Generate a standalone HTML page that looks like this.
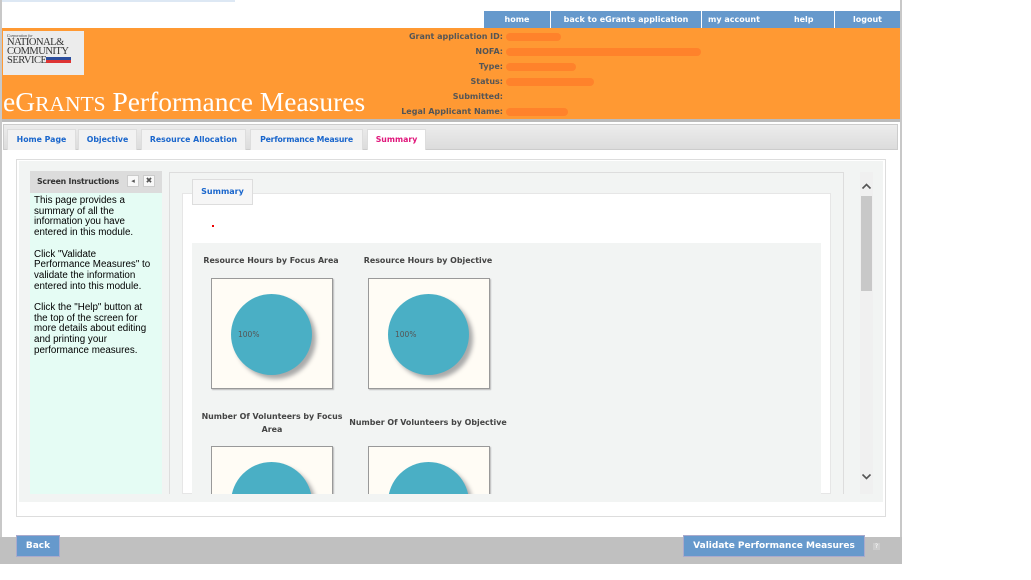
<!DOCTYPE html>
<html><head><meta charset="utf-8"><style>
*{margin:0;padding:0;box-sizing:border-box}
body{width:1031px;height:580px;background:#fff;position:relative;overflow:hidden;font-family:"DejaVu Sans","Liberation Sans",sans-serif}
.a{position:absolute}
.nav{top:11px;height:17px;background:#6699cc;color:#fff;font-weight:bold;font-size:8px;line-height:17px;text-align:center;white-space:nowrap}
.lbl{right:528px;color:#555;font-weight:bold;font-size:8px;text-align:right;width:200px}
.scr{background:#ff7f2a;height:8px;border-radius:4px;opacity:.9}
.tab{top:129px;height:21px;background:#f2f2f2;border:1px solid #ddd;border-bottom:none;color:#1a66cc;font-weight:bold;font-size:7.8px;line-height:20px;text-align:center;white-space:nowrap}
.ins{font-family:"Liberation Sans",sans-serif;font-size:9.8px;line-height:10.7px;color:#000;white-space:nowrap}
.ct{font-weight:bold;font-size:7.9px;color:#444;text-align:center}
.box{width:122px;height:111px;background:#fffcf5;border:1px solid #999;box-shadow:1px 1px 1px #bbb;overflow:hidden}
.pie{position:absolute;left:19px;top:15px;width:81px;height:81px;border-radius:50%;background:#4aafc5;box-shadow:4px 4px 4px #aaa}
.pl{position:absolute;left:26px;top:51px;font-size:7.5px;color:#555}
.btn{background:#6699cc;color:#fff;font-weight:bold;font-size:9px;line-height:20px;text-align:center;border:1px solid #aac;white-space:nowrap}
</style></head><body>
<div class="a" style="left:0;top:0;width:235px;height:2px;background:#dde8f4"></div>
<div class="a" style="left:0;top:0;width:2px;height:538px;background:#c8c8c8"></div>
<div class="a" style="left:900px;top:0;width:2px;height:538px;background:#c8c8c8"></div>
<div class="a nav" style="left:484px;width:66px">home</div>
<div class="a nav" style="left:551px;width:150px">back to eGrants application</div>
<div class="a nav" style="left:702px;width:132px;text-align:left;padding-left:6px">my account<span style="margin-left:34px">help</span></div>
<div class="a nav" style="left:835px;width:65px">logout</div>
<div class="a" style="left:2px;top:28px;width:898px;height:91px;background:#ff9933"></div>
<div class="a" style="left:2px;top:119px;width:898px;height:3px;background:#bbb"></div>
<div class="a" style="left:3px;top:31px;width:81px;height:44px;background:#ececec;font-family:'Liberation Serif',serif;color:#333;padding:2px 0 0 4px">
<div style="font-size:4px;font-style:italic">Corporation for</div>
<div style="font-size:10.5px;line-height:9px;letter-spacing:-.5px">NATIONAL&amp;<br>COMMUNITY<br>SERVICE<span style="display:inline-block;width:25px;height:6px;background:linear-gradient(#2a4c9c 50%,#d33 50%)"></span></div></div>
<div class="a" style="left:3px;top:86px;color:#fff;font-family:'Liberation Serif',serif;font-size:27.5px;white-space:nowrap">eG<span style="font-size:21.5px">RANTS</span> Performance Measures</div>
<div class="a lbl" style="top:32px">Grant application ID:</div>
<div class="a lbl" style="top:47px">NOFA:</div>
<div class="a lbl" style="top:62px">Type:</div>
<div class="a lbl" style="top:77px">Status:</div>
<div class="a lbl" style="top:92px">Submitted:</div>
<div class="a lbl" style="top:107px">Legal Applicant Name:</div>
<div class="a scr" style="left:506px;top:33px;width:55px"></div>
<div class="a scr" style="left:506px;top:48px;width:195px"></div>
<div class="a scr" style="left:506px;top:63px;width:70px"></div>
<div class="a scr" style="left:506px;top:78px;width:88px"></div>
<div class="a scr" style="left:506px;top:108px;width:62px"></div>
<div class="a" style="left:3px;top:124px;width:895px;height:26px;background:linear-gradient(#ececec,#dcdcdc);border:1px solid #ccc"></div>
<div class="a tab" style="left:7px;width:69px">Home Page</div>
<div class="a tab" style="left:78px;width:59px">Objective</div>
<div class="a tab" style="left:141px;width:105px">Resource Allocation</div>
<div class="a tab" style="left:250px;width:113px;letter-spacing:-.2px">Performance Measure</div>
<div class="a tab" style="left:367px;width:59px;background:#fff;color:#e0157a">Summary</div>
<div class="a" style="left:16px;top:159px;width:870px;height:358px;border:1px solid #ddd"></div>
<div class="a" style="left:19px;top:161px;width:864px;height:341px;background:#f2f4f3"></div>
<div class="a" style="left:30px;top:171px;width:132px;height:22px;background:#dcdcdc"></div>
<div class="a" style="left:37px;top:177px;font-size:7.8px;color:#333;font-weight:bold;white-space:nowrap;letter-spacing:-.2px">Screen Instructions</div>
<div class="a" style="left:127px;top:175px;width:12px;height:12px;background:#f8f8f8;border:1px solid #ccc;font-size:7px;text-align:center;line-height:10px;color:#555">◂</div>
<div class="a" style="left:143px;top:175px;width:12px;height:12px;background:#f8f8f8;border:1px solid #ccc;font-size:8px;text-align:center;line-height:10px;color:#555">✖</div>
<div class="a" style="left:30px;top:193px;width:132px;height:301px;background:#e5fcf4"></div>
<div class="a ins" style="left:34px;top:196px">This page provides a<br>summary of all the<br>information you have<br>entered in this module.<br><br>Click "Validate<br>Performance Measures" to<br>validate the information<br>entered into this module.<br><br>Click the "Help" button at<br>the top of the screen for<br>more details about editing<br>and printing your<br>performance measures.</div>
<div class="a" style="left:169px;top:172px;width:675px;height:322px;border:1px solid #ddd;border-bottom:none;background:#f2f4f3"></div>
<div class="a" style="left:182px;top:193px;width:649px;height:301px;background:#fff;border:1px solid #e6e6e6"></div>
<div class="a" style="left:192px;top:179px;width:61px;height:26px;background:#f6f6f6;border:1px solid #ddd;color:#1a66cc;font-weight:bold;font-size:8px;line-height:24px;text-align:center">Summary</div>
<div class="a" style="left:212px;top:225px;width:2px;height:2px;background:#e00"></div>
<div class="a" style="left:192px;top:243px;width:629px;height:251px;background:#f2f4f3"></div>
<div class="a ct" style="left:196px;top:256px;width:150px">Resource Hours by Focus Area</div>
<div class="a ct" style="left:353px;top:256px;width:150px">Resource Hours by Objective</div>
<div class="a box" style="left:211px;top:278px"><div class="pie"></div><div class="pl">100%</div></div>
<div class="a box" style="left:368px;top:278px"><div class="pie"></div><div class="pl">100%</div></div>
<div class="a ct" style="left:199px;top:410px;width:146px;line-height:13px">Number Of Volunteers by Focus Area</div>
<div class="a ct" style="left:346px;top:418px;width:164px;white-space:nowrap">Number Of Volunteers by Objective</div>
<div class="a" style="left:192px;top:446px;width:629px;height:48px;overflow:hidden">
<div class="a box" style="left:19px;top:0"><div class="pie"></div></div>
<div class="a box" style="left:176px;top:0"><div class="pie"></div></div></div>
<div class="a" style="left:860px;top:172px;width:13px;height:322px;background:#f0f0f0"></div>
<div class="a" style="left:861px;top:196px;width:11px;height:95px;background:#c8c8c8"></div>
<svg class="a" style="left:861px;top:182px" width="11" height="8"><path d="M1.5 6.5L5.5 2.5L9.5 6.5" fill="none" stroke="#555" stroke-width="1.6"/></svg>
<svg class="a" style="left:861px;top:473px" width="11" height="8"><path d="M1.5 1.5L5.5 5.5L9.5 1.5" fill="none" stroke="#555" stroke-width="1.6"/></svg>
<div class="a" style="left:0;top:537px;width:902px;height:27px;background:#c0c0c0"></div>
<div class="a btn" style="left:16px;top:535px;width:44px;height:22px">Back</div>
<div class="a btn" style="left:683px;top:535px;width:182px;height:22px">Validate Performance Measures</div>
<div class="a" style="left:873px;top:543px;width:7px;height:7px;background:#ccc;font-size:6px;color:#fff;text-align:center;line-height:7px">?</div>
</body></html>
